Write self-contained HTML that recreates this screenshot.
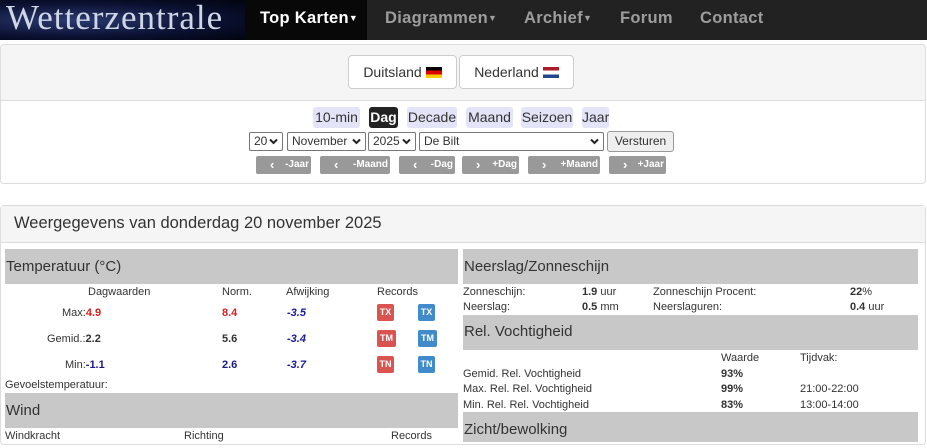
<!DOCTYPE html>
<html><head><meta charset="utf-8"><style>
*{box-sizing:border-box;margin:0;padding:0}
body{width:927px;height:438px;overflow:hidden;background:#fff;font-family:"Liberation Sans",sans-serif;color:#333;position:relative;font-size:11px}
.a{position:absolute;white-space:nowrap}
.nav{position:absolute;left:0;top:0;width:927px;height:40px;background:#222}
.logo{position:absolute;left:0;top:0;width:245px;height:40px;background:radial-gradient(ellipse at 30% 50%,#2a3a70,#0a1030 60%,#02040e);color:#cfd6e6;font-family:"Liberation Serif",serif;font-size:35px;line-height:36px;padding-left:6px;letter-spacing:1px}
.ni{position:absolute;top:0;height:40px;line-height:36px;font-weight:bold;font-size:16.5px;color:#9d9d9d;letter-spacing:0.3px}
.car{font-size:9px;vertical-align:2px}
.p1{position:absolute;left:0;top:44px;width:926px;height:140px;border:1px solid #ddd;border-radius:4px;overflow:hidden}
.p1h{height:56px;background:#f5f5f5;border-bottom:1px solid #ddd}
.cb{position:absolute;top:55px;height:34px;border:1px solid #ccc;border-radius:4px;background:#fff;font-size:14px;line-height:32px;text-align:center;color:#333}
.flag{display:inline-block;width:16px;height:11px;vertical-align:-1px;margin-left:4px}
.tab{position:absolute;top:107px;height:21px;line-height:21px;font-size:14px;background:#e4e4f8;border-radius:3px;text-align:center;color:#333}
.sel{position:absolute;top:132px;height:19px;border:1px solid #767676;border-radius:2px;background:#fff;font-size:12px;line-height:17px;padding-left:4px;color:#333}
.sel svg{position:absolute;right:4px;top:5px}
.gb{position:absolute;top:156px;height:18px;background:#999;border-radius:2px;color:#fff;font-size:10px;font-weight:bold;line-height:18px}
.gb b{position:absolute;left:14px;font-size:13px;line-height:17px}
.gb span{position:absolute;right:2px}
.p2{position:absolute;left:0;top:205px;width:926px;height:240px;border:1px solid #ddd;border-radius:4px}
.p2h{height:37px;background:#f5f5f5;border-bottom:1px solid #ddd;font-size:16.5px;line-height:35px;padding-left:13px;color:#333}
.gh{position:absolute;background:#c8c8c8;font-size:15px;color:#333;padding-left:1px}
.rb{position:absolute;width:17px;height:17px;border-radius:2px;color:#fff;font-weight:bold;font-size:9px;line-height:17px;text-align:center}
.r{background:#d9534f}.bl{background:#428bca}
.red{color:#d62020;font-weight:bold}.nv{color:#1a1a80;font-weight:bold}.it{color:#1a1a9a;font-weight:bold;font-style:italic}
</style></head><body>
<div class="nav">
<div class="logo">Wetterzentrale</div>
<div class="a" style="left:245px;top:0;width:122px;height:40px;background:#080808"></div>
<div class="ni" style="left:260px;color:#fff">Top Karten<span class="car">▼</span></div>
<div class="ni" style="left:385px">Diagrammen<span class="car">▼</span></div>
<div class="ni" style="left:524px">Archief<span class="car">▼</span></div>
<div class="ni" style="left:620px">Forum</div>
<div class="ni" style="left:700px">Contact</div>
</div>
<div class="p1"><div class="p1h"></div></div>
<div class="cb" style="left:348px;width:109px">Duitsland<span class="flag" style="background:linear-gradient(#000 33%,#d00 33%,#d00 66%,#fc0 66%)"></span></div>
<div class="cb" style="left:459px;width:115px">Nederland<span class="flag" style="background:linear-gradient(#ae1c28 33%,#fff 33%,#fff 66%,#21468b 66%)"></span></div>
<div class="tab" style="left:313px;width:47px">10-min</div>
<div class="tab" style="left:369px;width:29px;background:#222;color:#fff;font-weight:bold">Dag</div>
<div class="tab" style="left:407px;width:50px">Decade</div>
<div class="tab" style="left:466px;width:47px">Maand</div>
<div class="tab" style="left:521px;width:52px">Seizoen</div>
<div class="tab" style="left:582px;width:27px">Jaar</div>
<div class="sel" style="left:249px;width:34px">20<svg width="9" height="7" viewBox="0 0 9 7"><path d="M1 1.5L4.5 5L8 1.5" fill="none" stroke="#222" stroke-width="2"/></svg></div>
<div class="sel" style="left:287px;width:79px">November<svg width="9" height="7" viewBox="0 0 9 7"><path d="M1 1.5L4.5 5L8 1.5" fill="none" stroke="#222" stroke-width="2"/></svg></div>
<div class="sel" style="left:368px;width:48px">2025<svg width="9" height="7" viewBox="0 0 9 7"><path d="M1 1.5L4.5 5L8 1.5" fill="none" stroke="#222" stroke-width="2"/></svg></div>
<div class="sel" style="left:419px;width:185px">De Bilt<svg width="9" height="7" viewBox="0 0 9 7"><path d="M1 1.5L4.5 5L8 1.5" fill="none" stroke="#222" stroke-width="2"/></svg></div>
<div class="a" style="left:607px;top:131px;width:67px;height:21px;border:1px solid #999;border-radius:3px;background:#efefef;font-size:12px;line-height:19px;text-align:center">Versturen</div>
<div class="gb" style="left:256px;width:55px"><b>‹</b><span>-Jaar</span></div>
<div class="gb" style="left:320px;width:70px"><b>‹</b><span>-Maand</span></div>
<div class="gb" style="left:399px;width:56px"><b>‹</b><span>-Dag</span></div>
<div class="gb" style="left:462px;width:57px"><b>›</b><span>+Dag</span></div>
<div class="gb" style="left:528px;width:72px"><b>›</b><span>+Maand</span></div>
<div class="gb" style="left:609px;width:57px"><b>›</b><span>+Jaar</span></div>

<div class="p2"><div class="p2h">Weergegevens van donderdag 20 november 2025</div></div>

<div class="gh" style="left:5px;top:249px;width:453px;height:35px;line-height:36px">Temperatuur (°C)</div>
<div class="a" style="left:88px;top:286px">Dagwaarden</div>
<div class="a" style="left:222px;top:286px">Norm.</div>
<div class="a" style="left:286px;top:286px">Afwijking</div>
<div class="a" style="left:377px;top:286px">Records</div>
<div class="a" style="left:62px;top:307px">Max:<span class="red">4.9</span></div>
<div class="a red" style="left:222px;top:307px">8.4</div>
<div class="a it" style="left:287px;top:307px">-3.5</div>
<div class="a" style="left:47px;top:333px">Gemid.:<b>2.2</b></div>
<div class="a" style="left:222px;top:333px;font-weight:bold">5.6</div>
<div class="a it" style="left:287px;top:333px">-3.4</div>
<div class="a" style="left:65px;top:359px">Min:<span class="nv">-1.1</span></div>
<div class="a nv" style="left:222px;top:359px">2.6</div>
<div class="a it" style="left:287px;top:359px">-3.7</div>
<div class="rb r" style="left:377px;top:304px">TX</div><div class="rb bl" style="left:418px;top:304px">TX</div>
<div class="rb r" style="left:377px;top:330px;width:19px">TM</div><div class="rb bl" style="left:418px;top:330px;width:19px">TM</div>
<div class="rb r" style="left:377px;top:356px">TN</div><div class="rb bl" style="left:418px;top:356px">TN</div>
<div class="a" style="left:5px;top:379px">Gevoelstemperatuur:</div>
<div class="gh" style="left:5px;top:393px;width:453px;height:35px;line-height:36px">Wind</div>
<div class="a" style="left:5px;top:430px">Windkracht</div>
<div class="a" style="left:184px;top:430px">Richting</div>
<div class="a" style="left:391px;top:430px">Records</div>

<div class="gh" style="left:463px;top:249px;width:455px;height:35px;line-height:36px">Neerslag/Zonneschijn</div>
<div class="a" style="left:463px;top:286px">Zonneschijn:</div>
<div class="a" style="left:582px;top:286px"><b>1.9</b> uur</div>
<div class="a" style="left:653px;top:286px">Zonneschijn Procent:</div>
<div class="a" style="left:850px;top:286px"><b>22</b>%</div>
<div class="a" style="left:463px;top:301px">Neerslag:</div>
<div class="a" style="left:582px;top:301px"><b>0.5</b> mm</div>
<div class="a" style="left:653px;top:301px">Neerslaguren:</div>
<div class="a" style="left:850px;top:301px"><b>0.4</b> uur</div>
<div class="gh" style="left:463px;top:315px;width:455px;height:35px;line-height:34px">Rel. Vochtigheid</div>
<div class="a" style="left:721px;top:352px">Waarde</div>
<div class="a" style="left:800px;top:352px">Tijdvak:</div>
<div class="a" style="left:463px;top:368px">Gemid. Rel. Vochtigheid</div>
<div class="a" style="left:721px;top:368px;font-weight:bold">93%</div>
<div class="a" style="left:463px;top:383px">Max. Rel. Rel. Vochtigheid</div>
<div class="a" style="left:721px;top:383px;font-weight:bold">99%</div>
<div class="a" style="left:800px;top:383px">21:00-22:00</div>
<div class="a" style="left:463px;top:399px">Min. Rel. Rel. Vochtigheid</div>
<div class="a" style="left:721px;top:399px;font-weight:bold">83%</div>
<div class="a" style="left:800px;top:399px">13:00-14:00</div>
<div class="gh" style="left:463px;top:412px;width:455px;height:30px;line-height:36px">Zicht/bewolking</div>
</body></html>
